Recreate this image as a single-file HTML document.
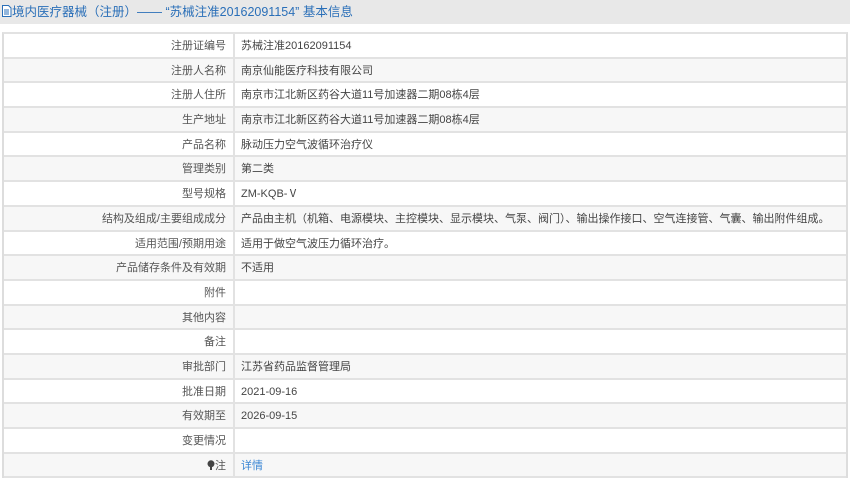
<!DOCTYPE html><html><head><meta charset="utf-8"><style>
body{margin:0;width:850px;height:477px;overflow:hidden;background:#fff;font-family:"Liberation Sans","Noto Sans CJK SC",sans-serif;}
.hd{position:absolute;left:0;top:0;width:850px;height:24px;background:#e8e8e8;color:#2a6fb8;font-size:12.5px;line-height:24px;}
.hd span{padding-left:1px}
.tb{position:absolute;left:2px;top:32px;width:842px;border-left:2px solid #ddd;border-right:2px solid #ddd;border-top:2px solid #e2e2e2;}
.r{height:22.7px;border-bottom:2px solid #e2e2e2;display:flex;font-size:11px;color:#444;line-height:24px}
.r:nth-child(even){background:#f7f7f7}
.l{width:222px;text-align:right;padding-right:7px;border-right:2px solid #e2e2e2;color:#555}
.v{padding-left:6px}
</style></head><body>
<div class="hd"><span><svg width="11" height="12" viewBox="0 0 11 12" style="vertical-align:-1px"><path d="M1.5 .5h6l2.5 2.5v8.5h-8.5z" fill="#fff" stroke="#2a6fb8"/><path d="M3 5h5M3 7h5M3 9h5" stroke="#2a6fb8"/></svg>境内医疗器械（注册）—— “苏械注准20162091154” 基本信息</span></div>
<div class="tb">
<div class="r"><div class="l">注册证编号</div><div class="v">苏械注准20162091154</div></div>
<div class="r"><div class="l">注册人名称</div><div class="v">南京仙能医疗科技有限公司</div></div>
<div class="r"><div class="l">注册人住所</div><div class="v">南京市江北新区药谷大道11号加速器二期08栋4层</div></div>
<div class="r"><div class="l">生产地址</div><div class="v">南京市江北新区药谷大道11号加速器二期08栋4层</div></div>
<div class="r"><div class="l">产品名称</div><div class="v">脉动压力空气波循环治疗仪</div></div>
<div class="r"><div class="l">管理类别</div><div class="v">第二类</div></div>
<div class="r"><div class="l">型号规格</div><div class="v">ZM-KQB-Ⅴ</div></div>
<div class="r"><div class="l">结构及组成/主要组成成分</div><div class="v">产品由主机（机箱、电源模块、主控模块、显示模块、气泵、阀门）、输出操作接口、空气连接管、气囊、输出附件组成。</div></div>
<div class="r"><div class="l">适用范围/预期用途</div><div class="v">适用于做空气波压力循环治疗。</div></div>
<div class="r"><div class="l">产品储存条件及有效期</div><div class="v">不适用</div></div>
<div class="r"><div class="l">附件</div><div class="v"></div></div>
<div class="r"><div class="l">其他内容</div><div class="v"></div></div>
<div class="r"><div class="l">备注</div><div class="v"></div></div>
<div class="r"><div class="l">审批部门</div><div class="v">江苏省药品监督管理局</div></div>
<div class="r"><div class="l">批准日期</div><div class="v">2021-09-16</div></div>
<div class="r"><div class="l">有效期至</div><div class="v">2026-09-15</div></div>
<div class="r"><div class="l">变更情况</div><div class="v"></div></div>
<div class="r"><div class="l"><svg width="8" height="10" viewBox="0 0 8 10" style="vertical-align:-1px"><circle cx="4" cy="3.8" r="3.5" fill="#444"/><rect x="3" y="7" width="2" height="3" fill="#444"/></svg>注</div><div class="v" style="color:#3a86d4">详情</div></div>
</div>
</body></html>
